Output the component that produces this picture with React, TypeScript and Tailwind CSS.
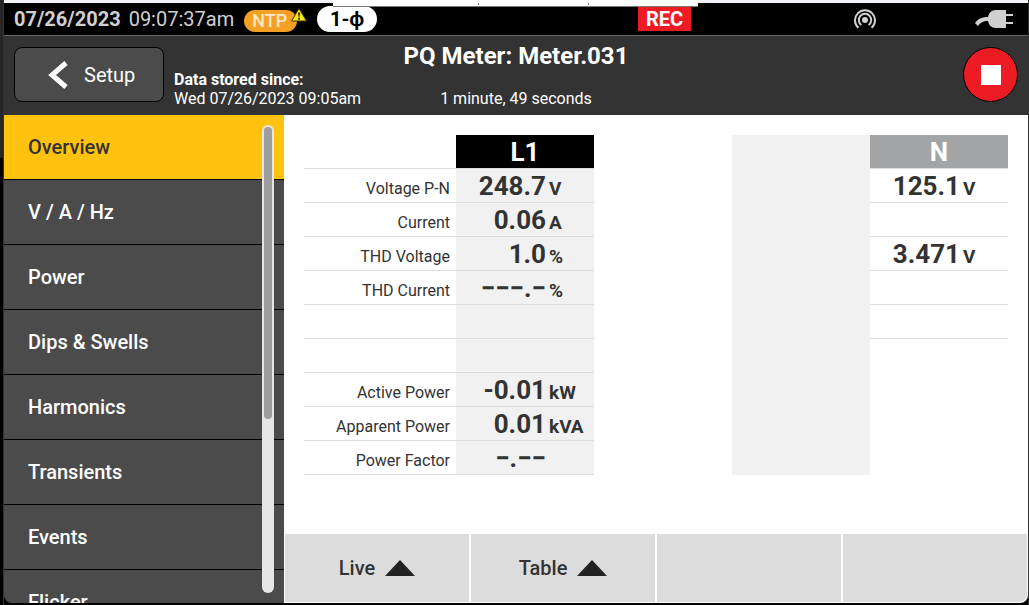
import { useState } from "react";

const menuItems = [
  "Overview",
  "V / A / Hz",
  "Power",
  "Dips & Swells",
  "Harmonics",
  "Transients",
  "Events",
  "Flicker",
];

type Reading = { value: string; unit?: string };
type Row = { label: string; l1?: Reading; n?: Reading };

const rows: Row[] = [
  {
    label: "Voltage P-N",
    l1: { value: "248.7", unit: "V" },
    n: { value: "125.1", unit: "V" },
  },
  { label: "Current", l1: { value: "0.06", unit: "A" } },
  {
    label: "THD Voltage",
    l1: { value: "1.0", unit: "%" },
    n: { value: "3.471", unit: "V" },
  },
  { label: "THD Current", l1: { value: "−−−.−", unit: "%" } },
  { label: "" },
  { label: "" },
  { label: "Active Power", l1: { value: "-0.01", unit: "kW" } },
  { label: "Apparent Power", l1: { value: "0.01", unit: "kVA" } },
  { label: "Power Factor", l1: { value: "−.−−" } },
];

function ReadingValue({ reading }: { reading?: Reading }) {
  if (!reading) return null;
  return (
    <div className="flex h-[33px] items-baseline gap-[3px] pt-[2px] font-bold">
      <span className="w-[90px] text-right text-[26px] leading-[30px]">
        {reading.value}
      </span>
      <span className="text-[19px] leading-5">{reading.unit}</span>
    </div>
  );
}

function StatusBar() {
  return (
    <div className="flex h-[33px] shrink-0 items-center border-b border-[#666] bg-black pr-[15px] pl-[10px] text-xl text-[#d0d0d0]">
      <span className="font-bold">07/26/2023</span>
      <span className="ml-2">09:07:37am</span>
      <span className="relative mt-1 ml-[10px] flex h-[22px] w-[53px] items-center rounded-full bg-[#f4a025] pl-2 text-lg font-medium text-[#fbe9c8]">
        NTP
        <svg
          className="absolute -top-[2px] -right-[10px]"
          width="16"
          height="14"
          viewBox="0 0 16 14"
        >
          <path d="M8 0.5 15.5 13H0.5Z" fill="#f7e51c" stroke="#3d3a10" />
          <path d="M7.1 4.5h1.8l-.4 4.3h-1zM7.2 9.8h1.6v1.6H7.2z" fill="#111" />
        </svg>
      </span>
      <span className="ml-5 flex h-[26px] w-[60px] items-center justify-center rounded-full bg-white font-bold text-black">
        1-ϕ
      </span>
      <span className="mr-[163px] ml-auto flex h-6 w-[53px] items-center justify-center bg-[#ed1c24] font-bold text-white">
        REC
      </span>
      <svg
        className="mr-[99px]"
        width="22"
        height="22"
        viewBox="0 0 22 22"
        fill="none"
        stroke="#d0d0d0"
        strokeWidth="2"
      >
        <circle cx="11" cy="12" r="3" fill="#d0d0d0" stroke="none" />
        <path d="M7.4 17A6.2 6.2 0 1 1 14.6 17" />
        <path d="M4.4 19.8A10 10 0 1 1 17.6 19.8" />
      </svg>
      <svg width="38" height="20" viewBox="0 0 38 20" fill="#d0d0d0">
        <path d="M21 1h10v18H21C16 19 14 16 13 12 8 12 5 14 3 17L0 14C3 9.500 8 8 13 8 14 4 16 1 21 1Z" />
        <path d="M31 5h7v2h-7zM31 13h7v2h-7z" />
      </svg>
    </div>
  );
}

function Header() {
  return (
    <header className="grid h-[79px] shrink-0 grid-cols-[1fr_auto_1fr] bg-[#333] pr-[10px] pl-[10px] text-white">
      <div className="flex gap-[10px] pt-[11px]">
        <button className="flex h-[55px] w-[150px] items-center rounded-lg border border-black bg-[#4b4b4b] pl-[33px] text-xl">
          <svg
            className="mr-4"
            width="20"
            height="28"
            viewBox="0 0 20 28"
            fill="none"
            stroke="white"
            strokeWidth="5"
          >
            <path d="M18 2 4 14 18 26" />
          </svg>
          Setup
        </button>
        <div className="pt-[23px] text-base leading-[19px]">
          <div className="font-bold">Data stored since:</div>
          <div>Wed 07/26/2023 09:05am</div>
        </div>
      </div>
      <div className="pt-1 text-center">
        <h1 className="text-2xl font-bold">PQ Meter: Meter.031</h1>
        <div className="pt-[17px] leading-[19px]">1 minute, 49 seconds</div>
      </div>
      <div className="flex justify-end pt-[11px]">
        <button
          aria-label="Stop recording"
          className="flex h-[55px] w-[55px] items-center justify-center rounded-full border border-black bg-[#ed1c24]"
        >
          <span className="h-5 w-5 bg-white" />
        </button>
      </div>
    </header>
  );
}

function Sidebar() {
  const [active, setActive] = useState("Overview");

  return (
    <nav className="relative w-[280px] shrink-0 overflow-hidden bg-[#4b4b4b]">
      <ul>
        {menuItems.map((item) => (
          <li key={item}>
            <button
              className={
                item === active
                  ? "h-[65px] w-full border-b border-black bg-[#ffc20e] pl-6 text-left text-xl font-medium text-[#333]"
                  : "h-[65px] w-full border-b border-black pl-6 text-left text-xl font-medium text-white"
              }
              onClick={() => setActive(item)}
            >
              {item}
            </button>
          </li>
        ))}
      </ul>
      <div className="absolute top-[10px] right-[10px] bottom-[10px] w-3 rounded-full bg-[#e6e6e6] px-[2px] py-[2px]">
        <div className="h-[63%] rounded-full bg-[#9e9e9e]" />
      </div>
    </nav>
  );
}

function MeterTable() {
  return (
    <table className="w-full table-fixed border-separate border-spacing-0 text-[#333]">
      <colgroup>
        <col className="w-[152px]" />
        <col />
        <col />
        <col />
        <col />
      </colgroup>
      <thead>
        <tr className="h-[34px] text-[26px] leading-8 text-white">
          <td className="border-b border-[#dcdcdc] p-0" />
          <th className="border-b border-[#dcdcdc] bg-black bg-clip-padding p-0 font-bold">
            L1
          </th>
          <td className="p-0" />
          <td className="bg-[#f1f1f1] p-0" />
          <th className="border-b border-[#dcdcdc] bg-[#a2a4a6] bg-clip-padding p-0 font-bold">
            N
          </th>
        </tr>
      </thead>
      <tbody>
        {rows.map((row, i) => (
          <tr key={i} className="h-[34px]">
            <th className="border-b border-[#dcdcdc] p-0 pt-[7px] pr-[6px] text-right text-base font-normal">
              {row.label}
            </th>
            <td className="border-b border-[#dcdcdc] bg-[#f1f1f1] p-0">
              <ReadingValue reading={row.l1} />
            </td>
            <td className="p-0" />
            <td className="bg-[#f1f1f1] p-0" />
            <td className={i < 5 ? "border-b border-[#dcdcdc] p-0" : "p-0"}>
              <ReadingValue reading={row.n} />
            </td>
          </tr>
        ))}
      </tbody>
    </table>
  );
}

function Softkeys() {
  return (
    <div className="grid h-[70px] shrink-0 grid-cols-4 gap-[2px] p-px text-xl font-medium text-[#333]">
      {["Live", "Table", "", ""].map((label, i) => (
        <button
          key={i}
          aria-label={label || "Unassigned"}
          className="flex items-center justify-center gap-[10px] bg-[#dcdcdc] last:rounded-br-lg"
        >
          {label && (
            <>
              {label}
              <svg width="30" height="16" viewBox="0 0 30 16" fill="#222">
                <path d="M15 0 30 16H0Z" />
              </svg>
            </>
          )}
        </button>
      ))}
    </div>
  );
}

export default function App() {
  return (
    <div className="flex h-screen overflow-hidden bg-black font-[Roboto,sans-serif]">
      <div className="w-1 shrink-0 border-r border-[#333]">
        <div className="h-[158px] bg-[#262626]" />
      </div>
      <div className="flex min-w-0 flex-1 flex-col border-r border-[#333] pb-[2px]">
        <div className="relative h-[3px] shrink-0 bg-[#f1f2f5]">
          {/* bottom edge of the window lying over the status bar */}
          <div className="absolute top-0 left-[329px] flex h-[7px] w-[365px] justify-end gap-[109px] border-b border-[#777] bg-white pr-[109px]">
            <div className="mt-[3px] h-[2px] w-px bg-[#777]" />
            <div className="mt-[3px] h-[2px] w-px bg-[#777]" />
          </div>
        </div>
        <StatusBar />
        <Header />
        <div className="flex min-h-0 flex-1 overflow-hidden rounded-b-lg">
          <Sidebar />
          <main className="flex min-w-0 flex-1 flex-col bg-white">
            <div className="flex-1 p-5">
              <MeterTable />
            </div>
            <Softkeys />
          </main>
        </div>
      </div>
    </div>
  );
}
